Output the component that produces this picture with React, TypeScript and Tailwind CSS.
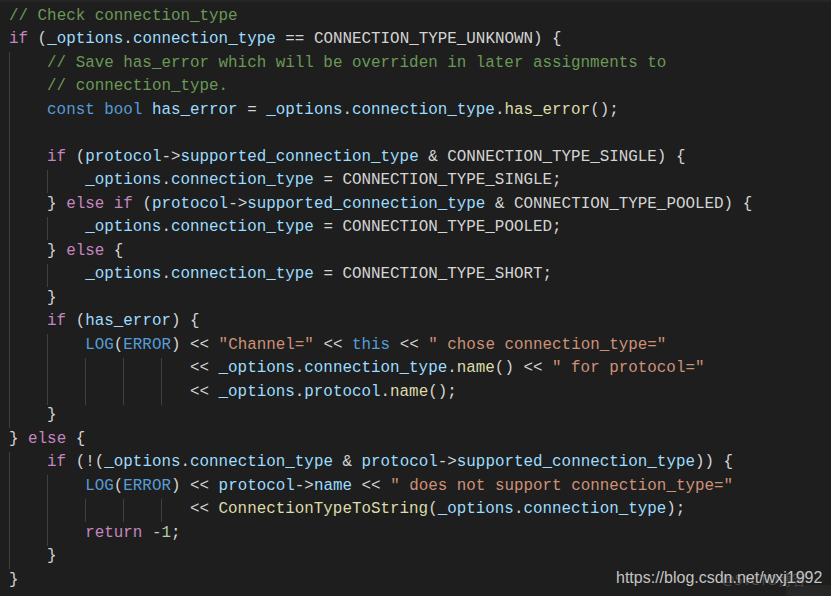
const lines: [number, number, string][] = [
  [0, 0, "// Check connection_type"],
  [0, 0, "if (_options.connection_type == CONNECTION_TYPE_UNKNOWN) {"],
  [4, 1, "// Save has_error which will be overriden in later assignments to"],
  [4, 1, "// connection_type."],
  [4, 1, "const bool has_error = _options.connection_type.has_error();"],
  [4, 1, ""],
  [4, 1, "if (protocol->supported_connection_type & CONNECTION_TYPE_SINGLE) {"],
  [8, 2, "_options.connection_type = CONNECTION_TYPE_SINGLE;"],
  [4, 1, "} else if (protocol->supported_connection_type & CONNECTION_TYPE_POOLED) {"],
  [8, 2, "_options.connection_type = CONNECTION_TYPE_POOLED;"],
  [4, 1, "} else {"],
  [8, 2, "_options.connection_type = CONNECTION_TYPE_SHORT;"],
  [4, 1, "}"],
  [4, 1, "if (has_error) {"],
  [8, 2, 'LOG(ERROR) << "Channel=" << this << " chose connection_type="'],
  [19, 5, '<< _options.connection_type.name() << " for protocol="'],
  [19, 5, "<< _options.protocol.name();"],
  [4, 1, "}"],
  [0, 0, "} else {"],
  [4, 1, "if (!(_options.connection_type & protocol->supported_connection_type)) {"],
  [8, 2, 'LOG(ERROR) << protocol->name << " does not support connection_type="'],
  [19, 5, "<< ConnectionTypeToString(_options.connection_type);"],
  [8, 2, "return -1;"],
  [4, 1, "}"],
  [0, 0, "}"],
];

const colors = {
  comment: "text-[#6a9955]",
  control: "text-[#c586c0]",
  storage: "text-[#569cd6]",
  variable: "text-[#9cdcfe]",
  func: "text-[#dcdcaa]",
  string: "text-[#ce9178]",
  number: "text-[#b5cea8]",
  plain: "text-[#d4d4d4]",
};

type Kind = keyof typeof colors;

const controlWords = new Set(["if", "else", "return"]);
const blueWords = new Set(["const", "bool", "this", "LOG", "ERROR"]);

function tokenize(src: string): [Kind, string][] {
  const out: [Kind, string][] = [];
  const re = /(\/\/.*$)|("[^"]*")|(-?\d+)|([A-Za-z_][A-Za-z0-9_]*)|(\s+)|(.)/g;
  let m: RegExpExecArray | null;
  while ((m = re.exec(src))) {
    if (m[1]) out.push(["comment", m[1]]);
    else if (m[2]) out.push(["string", m[2]]);
    else if (m[3]) out.push(["number", m[3]]);
    else if (m[4]) {
      const w = m[4];
      const next = src.slice(re.lastIndex).trimStart()[0];
      if (controlWords.has(w)) out.push(["control", w]);
      else if (blueWords.has(w)) out.push(["storage", w]);
      else if (/^[A-Z][A-Z_]+$/.test(w)) out.push(["plain", w]);
      else if (next === "(") out.push(["func", w]);
      else out.push(["variable", w]);
    } else out.push(["plain", m[0]]);
  }
  return out;
}

function Indent({ width, guides }: { width: number; guides: number }) {
  const spans = [];
  for (let i = 0; i < guides; i++) {
    const w = Math.min(4, width - i * 4);
    spans.push(
      <span
        key={i}
        className={`inline-block h-full border-l border-[#404040] ${w === 4 ? "w-[4ch]" : "w-[3ch]"}`}
      />
    );
  }
  return <>{spans}</>;
}

export default function App() {
  return (
    <div className="relative h-[596px] w-[831px] overflow-hidden border-t-2 border-[#262626] bg-[#1e1e1e] pl-[9px] pt-[3px] font-['Liberation_Mono',monospace] text-[15.88px]">
      {lines.map(([indent, guides, code], i) => (
        <div key={i} className="flex h-[23.5px] items-center whitespace-pre">
          <Indent width={indent} guides={guides} />
          {tokenize(code).map(([kind, text], j) => (
            <span key={j} className={colors[kind]}>
              {text}
            </span>
          ))}
        </div>
      ))}

      {/* watermarks */}
      <div className="absolute bottom-0 right-0 h-[11px] w-[45px] bg-[#262626]" />
      <div className="absolute bottom-[9px] left-[722px] font-['Noto_Sans','Noto_Sans_CJK_SC',sans-serif] text-[14px] leading-none text-[#4a4a4a]">
        @51CTO博客
      </div>
      <div className="absolute bottom-[10px] left-[616px] font-['Liberation_Sans',Arial,sans-serif] text-[16px] leading-none text-[#c4c4c4]">
        https://blog.csdn.net/wxj1992
      </div>
    </div>
  );
}
